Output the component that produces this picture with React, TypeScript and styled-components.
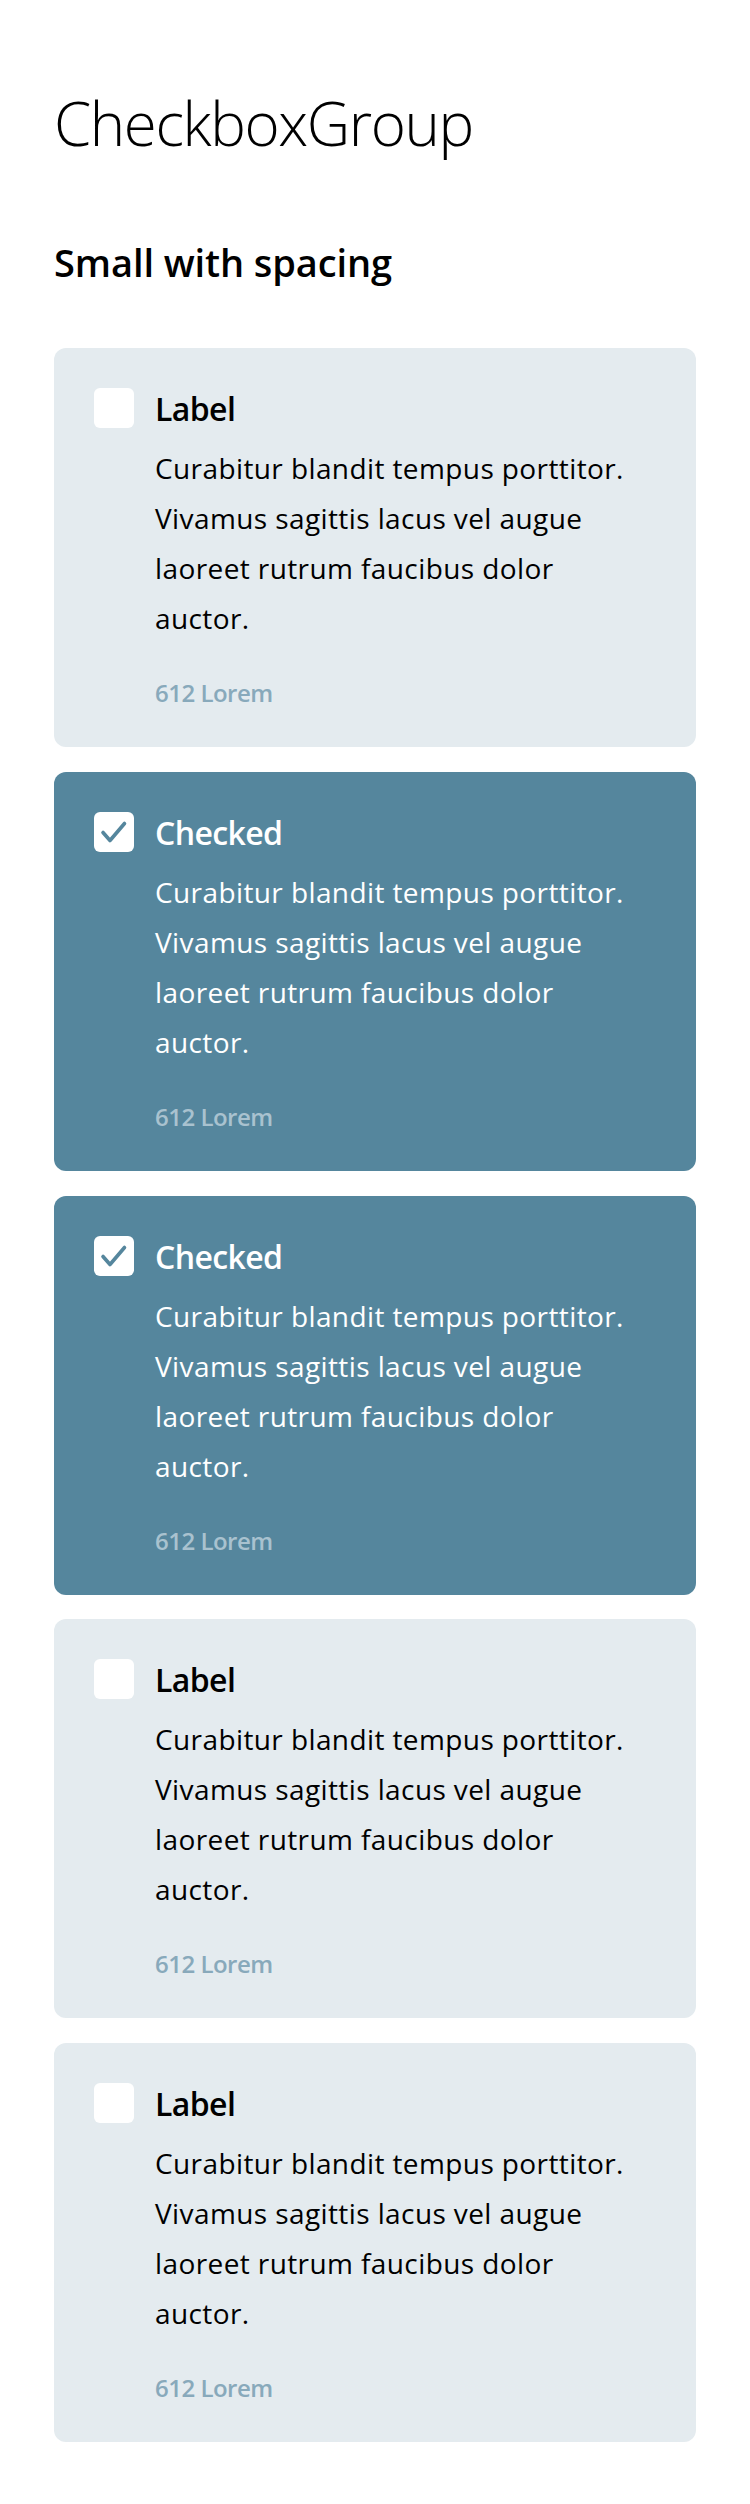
import React from "react";
import styled, { createGlobalStyle } from "styled-components";

const GlobalStyle = createGlobalStyle`
  html, body {
    margin: 0;
    padding: 0;
    background: #ffffff;
  }
  body {
    font-family: "Open Sans", "Noto Sans", sans-serif;
    color: #000000;
    -webkit-font-smoothing: antialiased;
  }
  * { box-sizing: border-box; }
`;

const Page = styled.main`
  display: flex;
  flex-direction: column;
  padding: 83px 54px 60px;
`;

const Title = styled.h1`
  margin: 0;
  font-size: 60px;
  line-height: 80px;
  font-weight: 300;
  letter-spacing: -1.4px;
  color: #000;
`;

const Subtitle = styled.h2`
  margin: 75px 0 62px;
  font-size: 38px;
  line-height: 48px;
  font-weight: 600;
  letter-spacing: -0.1px;
  color: #000;
`;

const Group = styled.div`
  display: flex;
  flex-direction: column;
  gap: 24.75px;
`;

const Card = styled.label<{ $checked: boolean }>`
  display: grid;
  grid-template-columns: 40px 1fr;
  column-gap: 21px;
  padding: 40px 51px 38px 40px;
  border-radius: 12px;
  background: ${(p) => (p.$checked ? "#55869d" : "#e4ebef")};
  color: ${(p) => (p.$checked ? "#ffffff" : "#000000")};
  cursor: pointer;
`;

const Box = styled.span`
  width: 40px;
  height: 40px;
  border-radius: 6px;
  background: #ffffff;
  display: flex;
  align-items: center;
  justify-content: center;
`;

const Content = styled.div`
  display: flex;
  flex-direction: column;
`;

const Label = styled.span`
  padding-top: 1px;
  font-size: 32px;
  line-height: 40px;
  font-weight: 600;
  letter-spacing: -0.6px;
`;

const Description = styled.p`
  margin: 14px 0 0;
  font-size: 28px;
  line-height: 50px;
  font-weight: 400;
  letter-spacing: 0.4px;
`;

const Meta = styled.span<{ $checked: boolean }>`
  margin-top: 34px;
  font-size: 24px;
  line-height: 32px;
  font-weight: 600;
  letter-spacing: -0.5px;
  color: ${(p) => (p.$checked ? "#a9c2cf" : "#88a9bb")};
`;

const CheckIcon = () => (
  <svg width="40" height="40" viewBox="0 0 40 40" fill="none">
    <path
      d="M9 20.5 L16 28.5 L30.5 11.5"
      stroke="#55869d"
      strokeWidth="3.6"
      strokeLinecap="round"
      strokeLinejoin="round"
    />
  </svg>
);

const items = [
  { label: "Label", checked: false },
  { label: "Checked", checked: true },
  { label: "Checked", checked: true },
  { label: "Label", checked: false },
  { label: "Label", checked: false },
];

const Option = ({ label, checked }: { label: string; checked: boolean }) => (
  <Card $checked={checked}>
    <Box>{checked && <CheckIcon />}</Box>
    <Content>
      <Label>{label}</Label>
      <Description>
        Curabitur blandit tempus porttitor. Vivamus sagittis lacus vel augue laoreet rutrum
        faucibus dolor auctor.
      </Description>
      <Meta $checked={checked}>612 Lorem</Meta>
    </Content>
  </Card>
);

export default function App() {
  return (
    <>
      <GlobalStyle />
      <Page>
        <Title>CheckboxGroup</Title>
        <Subtitle>Small with spacing</Subtitle>
        <Group>
          {items.map((it, i) => (
            <Option key={i} label={it.label} checked={it.checked} />
          ))}
        </Group>
      </Page>
    </>
  );
}
